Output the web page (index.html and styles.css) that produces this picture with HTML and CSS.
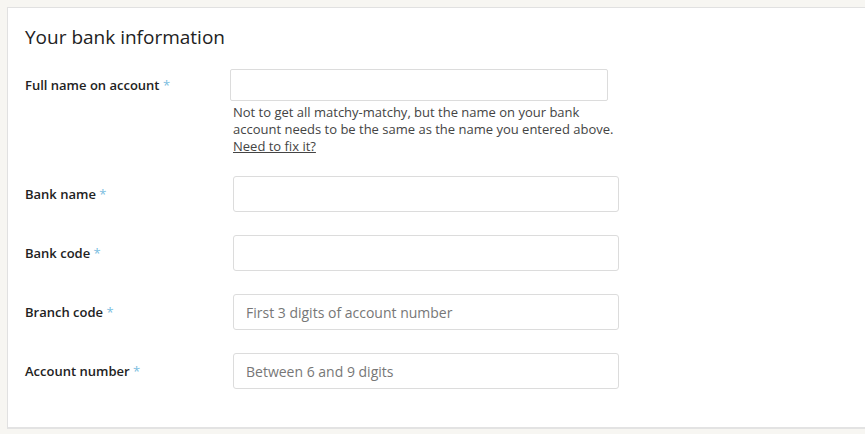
FILE: index.html
```html
<!DOCTYPE html>
<html lang="en">
<head>
  <meta charset="UTF-8">
  <meta name="viewport" content="width=device-width, initial-scale=1.0">
  <title>Bank information</title>
  <link rel="stylesheet" href="styles.css">
</head>
<body>
  <div class="bank-card">
    <h2>Your bank information</h2>

    <!-- Account holder -->
    <div class="field-row first">
      <label class="field-label" for="fullName">Full name on account <span class="req">*</span></label>
      <div class="field-body">
        <input class="text-input short" id="fullName" type="text">
        <p class="help-text">Not to get all matchy-matchy, but the name on your bank account needs to be the same as the name you entered above. <a href="#">Need to fix it?</a></p>
      </div>
    </div>

    <div class="field-row">
      <label class="field-label" for="bankName">Bank name <span class="req">*</span></label>
      <div class="field-body">
        <input class="text-input" id="bankName" type="text">
      </div>
    </div>

    <div class="field-row">
      <label class="field-label" for="bankCode">Bank code <span class="req">*</span></label>
      <div class="field-body">
        <input class="text-input" id="bankCode" type="text">
      </div>
    </div>

    <div class="field-row">
      <label class="field-label" for="branchCode">Branch code <span class="req">*</span></label>
      <div class="field-body">
        <input class="text-input" id="branchCode" type="text" placeholder="First 3 digits of account number">
      </div>
    </div>

    <div class="field-row">
      <label class="field-label" for="accountNumber">Account number <span class="req">*</span></label>
      <div class="field-body">
        <input class="text-input" id="accountNumber" type="text" placeholder="Between 6 and 9 digits">
      </div>
    </div>
  </div>
</body>
</html>
```

FILE: styles.css
```css
body {
  margin: 0;
  padding: 7px 0 5px 7px;
  background-color: #f7f6f2;
  font-family: "Open Sans", Arial, sans-serif;
  color: #222;
}
.bank-card {
  background-color: #fff;
  border: 1px solid #e1e1e1;
  border-bottom: 2px solid #e3e3e3;
  border-right: none;
  padding: 17px 0 0 17px;
  height: 422px;
  box-sizing: border-box;
}
.bank-card h2 {
  margin: 0 0 20px 0;
  font-size: 19px;
  font-weight: 500;
  line-height: 24px;
  color: #222;
}
.field-row {
  display: grid;
  grid-template-columns: 208px 386px;
  margin-bottom: 23px;
}
.field-row.first {
  margin-bottom: 21px;
}
.field-label {
  font-size: 13px;
  font-weight: 600;
  line-height: 36px;
  color: #222;
}
.field-row.first .field-label {
  line-height: 32px;
}
.req {
  color: #7bbde0;
  font-weight: 400;
}
.text-input {
  display: block;
  box-sizing: border-box;
  width: 386px;
  height: 36px;
  margin: 0;
  padding: 0 12px;
  border: 1px solid #dcdcdc;
  border-radius: 3px;
  font-family: inherit;
  font-size: 14px;
  color: #222;
  background: #fff;
}
.text-input.short {
  width: 378px;
  height: 32px;
  margin-left: -3px;
  border-radius: 2px;
}
.text-input::placeholder {
  color: #777;
}
.help-text {
  margin: 3px 0 0 0;
  max-width: 384px;
  font-size: 13px;
  line-height: 17px;
  color: #444;
}
.help-text a {
  color: #444;
  text-decoration: underline;
}
```
